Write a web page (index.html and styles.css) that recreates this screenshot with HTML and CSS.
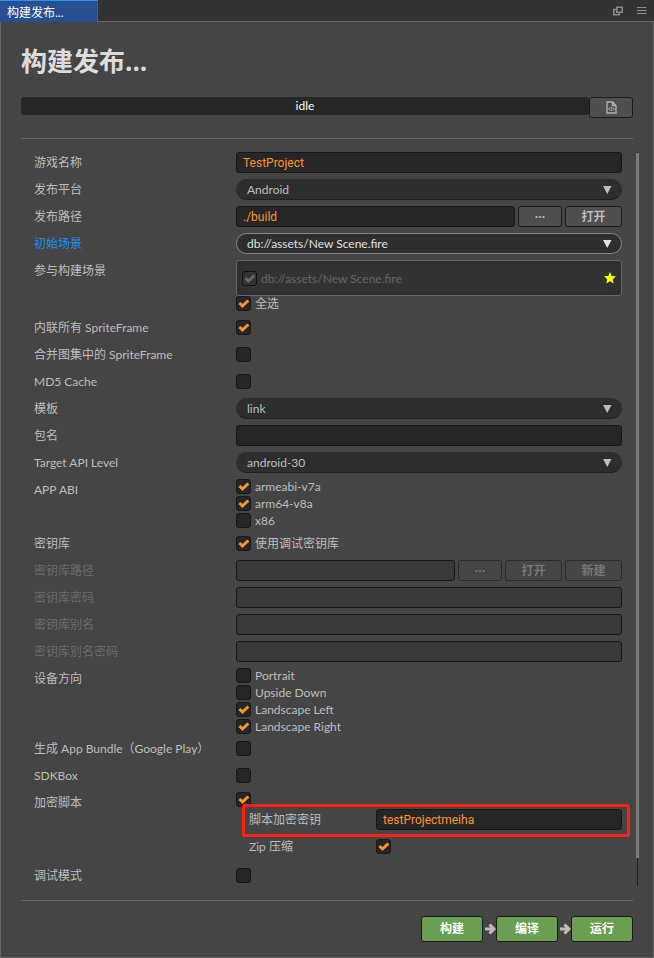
FILE: index.html
```html
<!DOCTYPE html>
<html lang="zh-CN">
<head>
<meta charset="utf-8">
<title>构建发布...</title>
<link rel="stylesheet" href="styles.css">
</head>
<body>
<header class="tabs">
  <button class="tab" type="button">构建发布...</button>
  <div class="tab-tools">
    <button class="tool" type="button" aria-label="弹出窗口"><svg width="10" height="10" viewBox="0 0 10 10"><path d="M3.75 1.25h5.5v5h-5.5zM3 3.5H.75v5.25h5.5V7" fill="none" stroke="#8a8a8a" stroke-width="1.5"/></svg></button>
    <button class="tool" type="button" aria-label="菜单"><svg width="10" height="10" viewBox="0 0 10 10"><path d="M0 1.5h9.500M0 4.500h9.500M0 7.500h9.500" fill="none" stroke="#8c8c8c"/></svg></button>
  </div>
</header>
<main class="panel">
  <h1>构建发布...</h1>
  <div class="status">
    <div class="progress" role="status">idle</div>
    <button class="btn log" type="button" aria-label="日志"><svg width="11" height="13" viewBox="0 0 11 13" fill="none" stroke="#b4b4ae"><path d="M1 1h5.500l3.500 3.500v7.500h-9zM6.500 1v3.500h3.500" stroke-width="1.300"/><path d="M4 6.500l-1.500 1.500 1.500 1.500M7 6.500l1.500 1.500-1.500 1.500M6 6l-1 4"/></svg></button>
  </div>
  <form class="scroller">
    <div class="fields">
      <div class="row"><label class="name" for="title">游戏名称</label><div class="ctl"><input class="text" id="title" type="text" value="TestProject"></div></div>
      <div class="row"><label class="name" for="platform">发布平台</label><div class="ctl"><div class="drop"><select id="platform"><option>Android</option></select><svg class="caret" width="9" height="8" viewBox="0 0 9 8"><path d="M0 0h8.500l-4.250 8z"/></svg></div></div></div>
      <div class="row"><label class="name" for="path">发布路径</label><div class="ctl"><input class="text" id="path" type="text" value="./build"><button class="btn small" type="button">···</button><button class="btn wide" type="button">打开</button></div></div>
      <div class="row"><label class="name active" for="scene">初始场景</label><div class="ctl"><div class="drop focus"><select id="scene"><option>db://assets/New Scene.fire</option></select><svg class="caret" width="9" height="8" viewBox="0 0 9 8"><path d="M0 0h8.500l-4.250 8z"/></svg></div></div></div>
      <div class="row"><span class="name">参与构建场景</span><div class="stack">
        <div class="scenes"><label class="check off"><input type="checkbox" checked disabled>db://assets/New Scene.fire</label><svg class="star" width="12" height="12" viewBox="0 0 12 12"><path d="M6 0l1.700 3.900 4.300.4-3.200 2.900.9 4.300L6 9.300l-3.700 2.200.9-4.300L0 4.300l4.300-.4z" fill="#ff0"/></svg></div>
        <label class="check"><input type="checkbox" checked>全选</label>
      </div></div>
      <div class="row"><label class="name" for="inline">内联所有 SpriteFrame</label><div class="ctl"><input id="inline" type="checkbox" checked></div></div>
      <div class="row"><label class="name" for="merge">合并图集中的 SpriteFrame</label><div class="ctl"><input id="merge" type="checkbox"></div></div>
      <div class="row"><label class="name" for="md5">MD5 Cache</label><div class="ctl"><input id="md5" type="checkbox"></div></div>
      <div class="row"><label class="name" for="template">模板</label><div class="ctl"><div class="drop"><select id="template"><option>link</option></select><svg class="caret" width="9" height="8" viewBox="0 0 9 8"><path d="M0 0h8.500l-4.250 8z"/></svg></div></div></div>
      <div class="row"><label class="name" for="package">包名</label><div class="ctl"><input class="text" id="package" type="text"></div></div>
      <div class="row"><label class="name" for="api">Target API Level</label><div class="ctl"><div class="drop"><select id="api"><option>android-30</option></select><svg class="caret" width="9" height="8" viewBox="0 0 9 8"><path d="M0 0h8.500l-4.250 8z"/></svg></div></div></div>
      <div class="row"><span class="name">APP ABI</span><div class="stack checks">
        <label class="check"><input type="checkbox" checked>armeabi-v7a</label>
        <label class="check"><input type="checkbox" checked>arm64-v8a</label>
        <label class="check"><input type="checkbox">x86</label>
      </div></div>
      <div class="row"><span class="name">密钥库</span><div class="ctl"><label class="check"><input type="checkbox" checked>使用调试密钥库</label></div></div>
      <div class="row"><label class="name dim" for="kpath">密钥库路径</label><div class="ctl"><input class="text" id="kpath" type="text" disabled><button class="btn small" type="button" disabled>···</button><button class="btn wide" type="button" disabled>打开</button><button class="btn wide" type="button" disabled>新建</button></div></div>
      <div class="row"><label class="name dim" for="kpass">密钥库密码</label><div class="ctl"><input class="text" id="kpass" type="text" disabled></div></div>
      <div class="row"><label class="name dim" for="alias">密钥库别名</label><div class="ctl"><input class="text" id="alias" type="text" disabled></div></div>
      <div class="row"><label class="name dim" for="apass">密钥库别名密码</label><div class="ctl"><input class="text" id="apass" type="text" disabled></div></div>
      <div class="row"><span class="name">设备方向</span><div class="stack checks four">
        <label class="check"><input type="checkbox">Portrait</label>
        <label class="check"><input type="checkbox">Upside Down</label>
        <label class="check"><input type="checkbox" checked>Landscape Left</label>
        <label class="check"><input type="checkbox" checked>Landscape Right</label>
      </div></div>
      <div class="row"><label class="name" for="bundle">生成 App Bundle（Google Play）</label><div class="ctl"><input id="bundle" type="checkbox"></div></div>
      <div class="row"><label class="name" for="sdkbox">SDKBox</label><div class="ctl"><input id="sdkbox" type="checkbox"></div></div>
      <div class="row"><label class="name" for="encrypt">加密脚本</label><div class="stack encrypt">
        <div class="lead"><input id="encrypt" type="checkbox" checked></div>
        <div class="sub marked"><label class="subname" for="key">脚本加密密钥</label><input class="text" id="key" type="text" value="testProjectmeiha"></div>
        <div class="sub"><label class="subname" for="zip">Zip 压缩</label><input id="zip" type="checkbox" checked></div>
      </div></div>
      <div class="row"><label class="name" for="debug">调试模式</label><div class="ctl"><input id="debug" type="checkbox"></div></div>
    </div>
    <div class="track"><div class="thumb"></div></div>
  </form>
  <footer class="actions">
    <button class="go" type="button">构建</button>
    <svg class="arrow" width="11" height="12" viewBox="0 0 11 12"><path d="M0 6h9M4.500 1.500L9 6l-4.500 4.500"/></svg>
    <button class="go" type="button">编译</button>
    <svg class="arrow" width="11" height="12" viewBox="0 0 11 12"><path d="M0 6h9M4.500 1.500L9 6l-4.500 4.500"/></svg>
    <button class="go" type="button">运行</button>
  </footer>
</main>
</body>
</html>
```
FILE: styles.css
```css
* { box-sizing: border-box; }

body {
  margin: 0;
  min-height: 100vh;
  display: flex;
  flex-direction: column;
  background: #454545;
  color: #bdbdbd;
  font: 12px/22px Lato, "Noto Sans CJK SC", sans-serif;
}

button, input, select { font: inherit; margin: 0; }

.tabs {
  display: flex;
  justify-content: space-between;
  height: 22px;
  background: #333;
  border-bottom: 1px solid #666;
}

.tab {
  width: 98px;
  height: 22px;
  padding: 2px 7px 0;
  border: 0;
  border-top: 1px solid #2196f3;
  border-right: 1px solid #4a5f8c;
  background: #284f91;
  color: #fff;
  text-align: left;
  line-height: 18px;
}

.tab-tools { display: flex; align-items: center; gap: 14px; padding-right: 7px; }
.tool { display: flex; padding: 0; border: 0; background: none; }

.panel {
  flex: 1;
  display: flex;
  flex-direction: column;
  padding: 19px 20px 15px;
  border: 1px solid #666;
  border-top: 0;
}

h1 {
  margin: 0 0 16px;
  color: #dcdcdc;
  font-family: "Open Sans", "Noto Sans CJK SC", sans-serif;
  font-size: 26px;
  line-height: 40px;
}

.status {
  display: flex;
  align-items: flex-start;
  padding-bottom: 20px;
  border-bottom: 1px solid #666;
}

.progress {
  flex: 1;
  height: 18px;
  border-radius: 3px;
  background: #262626;
  color: #fff;
  line-height: 18px;
  text-align: center;
}

.btn {
  height: 21px;
  padding: 0;
  border: 1px solid #1a1a1a;
  border-radius: 3px;
  background: #4f4f4f;
  color: #bdbdbd;
  font-family: "Open Sans", "Noto Sans CJK SC", sans-serif;
  font-weight: bold;
  line-height: 19px;
}

.btn:disabled { background: #454545; border-color: #2c2c2c; color: #777; }
.log { display: flex; align-items: center; justify-content: center; width: 44px; }
.small { width: 44px; }
.wide { width: 57px; }

.scroller {
  display: flex;
  gap: 14px;
  margin: 13px -6px 14px 0;
}

.fields {
  flex: 1;
  min-width: 0;
  display: flex;
  flex-direction: column;
  gap: 6px;
  padding-left: 13px;
}

.row { display: flex; align-items: flex-start; }
.name { width: 202px; height: 21px; flex: none; }
.active { color: #1a90f5; }
.dim { color: #6c6c6c; }

.ctl { flex: 1; min-width: 0; display: flex; align-items: center; gap: 3px; height: 21px; }
.stack { flex: 1; min-width: 0; display: flex; flex-direction: column; }

.text {
  flex: 1;
  min-width: 0;
  height: 21px;
  padding: 0 6px;
  border: 1px solid #171717;
  border-radius: 3px;
  background: #262626;
  color: #fd942b;
  font-family: Roboto, "Noto Sans CJK SC", sans-serif;
  line-height: 19px;
}

.text:disabled { background: #3a3a3a; }

.drop { position: relative; flex: 1; }

select {
  display: block;
  width: 100%;
  height: 21px;
  padding: 0 24px 0 10px;
  border: 1px solid #2e2e2e;
  border-bottom-color: #202020;
  border-radius: 11px;
  appearance: none;
  background: #2e2e2e;
  color: #bdbdbd;
  line-height: 19px;
}

.focus select { border-color: #888; color: #e0e0e0; }
.caret { position: absolute; right: 10px; top: 7px; fill: #bdbdbd; pointer-events: none; }
.focus .caret { fill: #e0e0e0; }

input[type="checkbox"] {
  flex: none;
  width: 15px;
  height: 15px;
  border: 1px solid #171717;
  border-radius: 3px;
  appearance: none;
  background: #262626;
}

input[type="checkbox"]:checked {
  background: #262626 url("data:image/svg+xml,%3Csvg xmlns='http://www.w3.org/2000/svg' viewBox='0 0 13 13'%3E%3Cpath d='M2.500 6l3 3 5.800-5.500' fill='none' stroke='%23fd942b' stroke-width='3'/%3E%3C/svg%3E") center / 13px 13px no-repeat;
}

input[type="checkbox"]:disabled {
  border-color: #111;
  background: #333 url("data:image/svg+xml,%3Csvg xmlns='http://www.w3.org/2000/svg' viewBox='0 0 13 13'%3E%3Cpath d='M2.500 6l3 3 5.800-5.500' fill='none' stroke='%23686868' stroke-width='3'/%3E%3C/svg%3E") center / 13px 13px no-repeat;
}

.check { display: flex; align-items: center; gap: 4px; height: 15px; line-height: 15px; }
.off { color: #666; }

.checks { gap: 2px; margin-bottom: -1px; }
.four { margin-bottom: -2px; }

.scenes {
  display: flex;
  align-items: center;
  justify-content: space-between;
  height: 36px;
  padding: 0 5px;
  border: 1px solid #666;
  border-radius: 3px;
  background: #333;
  box-shadow: inset 0 0 8px #2a2a2a;
}

.lead { display: flex; height: 17px; }
.encrypt { padding-bottom: 2px; }
.sub { position: relative; display: flex; align-items: center; height: 21px; margin-left: 13px; }
.sub + .sub { margin-top: 6px; }
.subname { width: 127px; flex: none; }

.marked::after {
  content: "";
  position: absolute;
  inset: -5px -8px -7px -7px;
  border: 3px solid #ff2211;
  border-radius: 3px;
  pointer-events: none;
}

.track {
  width: 3px;
  background: linear-gradient(#222, #222) center / 1px 100% no-repeat;
}

.thumb { height: 96%; margin-top: 1px; background: #7d7d7d; }

.actions {
  display: flex;
  align-items: center;
  justify-content: flex-end;
  margin-top: auto;
  padding-top: 15px;
  border-top: 1px solid #666;
}

.go {
  width: 62px;
  height: 26px;
  padding: 0;
  border: 1px solid #1a1a1a;
  border-radius: 3px;
  background: #6a9e50;
  color: #fff;
  font-weight: bold;
  line-height: 24px;
}

.arrow { margin-left: 2px; fill: none; stroke: #bdbdbd; stroke-width: 3; }
```
